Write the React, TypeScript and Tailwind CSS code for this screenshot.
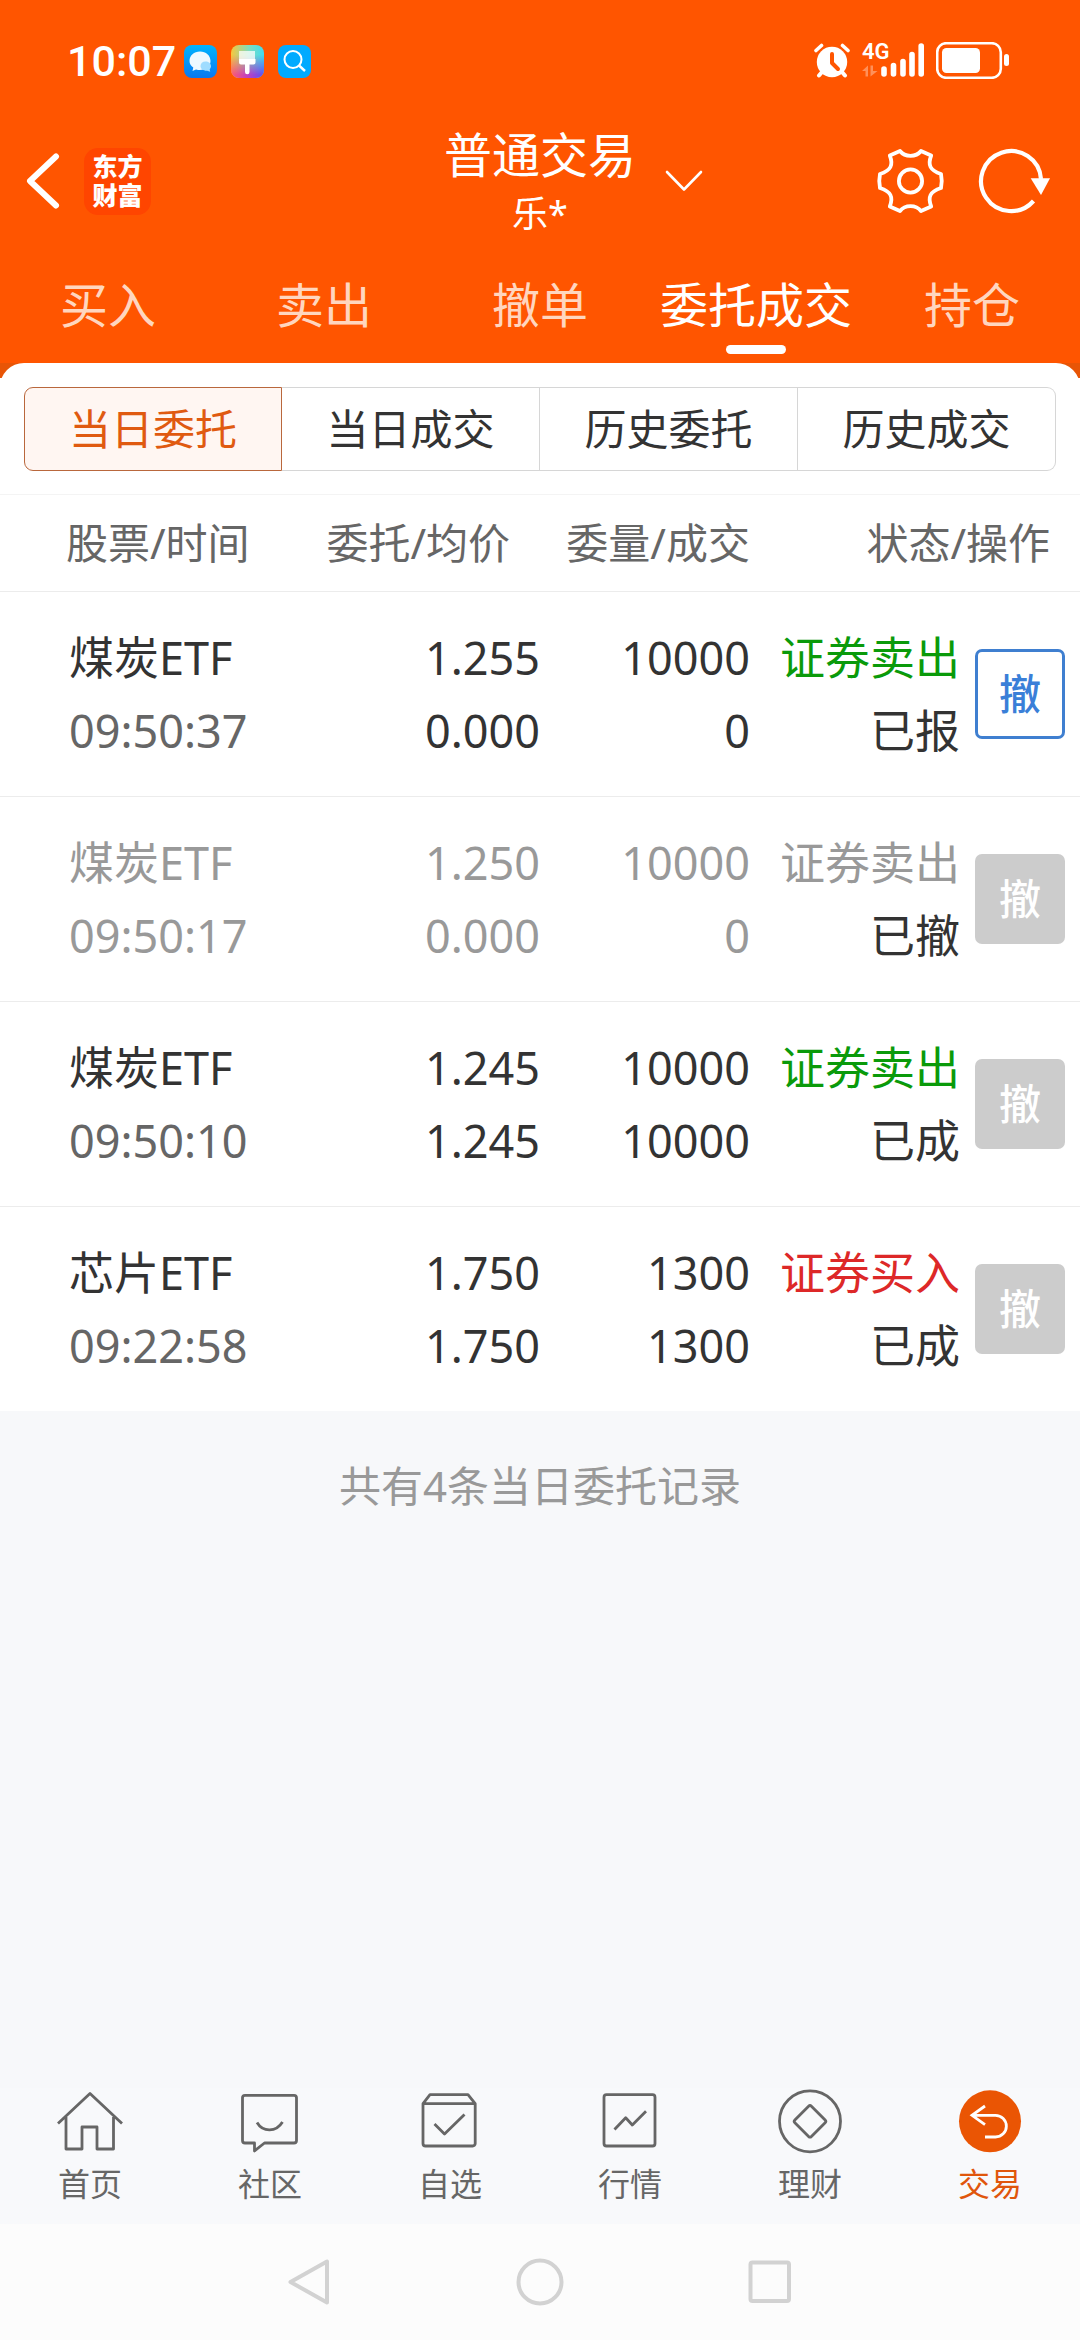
import type { ReactNode } from "react";

type Order = {
  name: string;
  time: string;
  price: string;
  avg: string;
  qty: string;
  filled: string;
  side: "证券卖出" | "证券买入";
  status: string;
  state: "open" | "cancelled" | "done";
};

const tabs = ["买入", "卖出", "撤单", "委托成交", "持仓"];
const segments = ["当日委托", "当日成交", "历史委托", "历史成交"];

const orders: Order[] = [
  { name: "煤炭ETF", time: "09:50:37", price: "1.255", avg: "0.000", qty: "10000", filled: "0", side: "证券卖出", status: "已报", state: "open" },
  { name: "煤炭ETF", time: "09:50:17", price: "1.250", avg: "0.000", qty: "10000", filled: "0", side: "证券卖出", status: "已撤", state: "cancelled" },
  { name: "煤炭ETF", time: "09:50:10", price: "1.245", avg: "1.245", qty: "10000", filled: "10000", side: "证券卖出", status: "已成", state: "done" },
  { name: "芯片ETF", time: "09:22:58", price: "1.750", avg: "1.750", qty: "1300", filled: "1300", side: "证券买入", status: "已成", state: "done" },
];

function StatusBar() {
  return (
    <div className="flex h-[122px] items-start justify-between pt-[41px] pr-[70px] pl-[67px]">
      <div className="flex h-10 items-center gap-2">
        <span className="font-[Roboto] text-[43px] leading-10 font-medium">10:07</span>
        <div className="flex items-center gap-[14px]">
          <svg width="33" height="33" viewBox="0 0 33 33" aria-hidden="true">
            <defs>
              <linearGradient id="msg" x1="0" y1="0" x2="0" y2="1">
                <stop offset="0" stopColor="#00b4ff" />
                <stop offset="1" stopColor="#0a78f0" />
              </linearGradient>
            </defs>
            <rect width="33" height="33" rx="8" fill="url(#msg)" />
            <path d="M16 6.500c6 0 10.500 4 10.500 9.500S22 25 16 25c-1.500 0-2.500 0-4-.6L8.500 26l.8-3.500C7 21 5.500 19 5.500 16 5.500 10.500 10 6.500 16 6.500Z" fill="#eef9ff" />
            <path d="M21.500 16.500c3 0 5.500 2 5.500 4.600 0 1.400-.5 2.400-1.300 3.200l.5 2.500-3-1c-3.500.3-6.700-1.800-6.700-4.700 0-2.600 2-4.600 5-4.600Z" fill="#9fdcff" />
          </svg>
          <svg width="33" height="33" viewBox="0 0 33 33" aria-hidden="true">
            <defs>
              <linearGradient id="themeTop" x1="0" y1="0" x2="1" y2="0">
                <stop offset="0" stopColor="#f8c63c" />
                <stop offset="0.55" stopColor="#7fdcc0" />
                <stop offset="1" stopColor="#3fdcf0" />
              </linearGradient>
              <linearGradient id="themeBottom" x1="0" y1="0" x2="1" y2="0">
                <stop offset="0" stopColor="#ff5a6e" />
                <stop offset="0.5" stopColor="#c040c0" />
                <stop offset="1" stopColor="#5b50f5" />
              </linearGradient>
              <linearGradient id="fade" x1="0" y1="0" x2="0" y2="1">
                <stop offset="0.3" stopColor="#000" />
                <stop offset="0.9" stopColor="#fff" />
              </linearGradient>
              <mask id="fadeMask">
                <rect width="33" height="33" fill="url(#fade)" />
              </mask>
            </defs>
            <rect width="33" height="33" rx="8" fill="url(#themeTop)" />
            <rect width="33" height="33" rx="8" fill="url(#themeBottom)" mask="url(#fadeMask)" />
            <path d="M8 6h16v8H8z" fill="#fff" opacity="0.75" />
            <path d="M8 14h16.500v3.500a2 2 0 0 1-2 2H18.500V27a2 2 0 0 1-4.500 0v-7.500h-4a2 2 0 0 1-2-2Z" fill="#fff" />
          </svg>
          <svg width="33" height="33" viewBox="0 0 33 33" aria-hidden="true">
            <rect width="33" height="33" rx="8" fill="#00aaff" />
            <circle cx="15" cy="14.500" r="8.500" fill="none" stroke="#fff" strokeWidth="2" />
            <path d="m21 20.500 6 5.500" stroke="#fff" strokeWidth="2.400" />
          </svg>
        </div>
      </div>
      <div className="flex h-[38px] items-center gap-3">
        <svg width="36" height="36" viewBox="0 0 36 36" aria-hidden="true">
          <circle cx="18" cy="20" r="15.200" fill="#fff" />
          <path d="M2 8.500 7.500 3.500M34 8.500 28.500 3.500" stroke="#fff" strokeWidth="3.600" strokeLinecap="round" />
          <path d="m8 30-3 3.500M28 30l3 3.500" stroke="#fff" strokeWidth="4" strokeLinecap="round" />
          <path d="M18 12v9l6 6" stroke="#ff5500" strokeWidth="4" strokeLinecap="round" strokeLinejoin="round" fill="none" />
        </svg>
        <div className="relative h-9 w-[62px]">
          <span className="absolute top-0 left-0 font-[Roboto] text-[22px] leading-5 font-semibold">4G</span>
          <svg width="62" height="36" viewBox="0 0 62 36" aria-hidden="true">
            <path d="M22 32v-5M31.500 32V23.500M41 32V19.500M50 32V12.500M59.200 32V4" stroke="#fff" strokeWidth="5.600" strokeLinecap="round" />
            <path d="M0 29 6 23.500v11H3.500v-5.500ZM8.500 23.500H11v5.500h4.500L8.500 34.500Z" fill="#fff" opacity="0.350" />
          </svg>
        </div>
        <svg width="74" height="37" viewBox="0 0 74 37" aria-hidden="true">
          <rect x="1.200" y="1.200" width="63.600" height="34.600" rx="9" fill="none" stroke="#fff" strokeWidth="2.600" />
          <rect x="6" y="6" width="38" height="25" rx="4.500" fill="#fff" />
          <rect x="68" y="12" width="5" height="12" rx="2.500" fill="#fff" />
        </svg>
      </div>
    </div>
  );
}

function TitleBar() {
  return (
    <div className="grid grid-cols-[1fr_auto_1fr] items-center">
      <div className="flex items-center gap-6 pl-6">
        <button type="button" aria-label="返回">
          <svg width="36" height="56" viewBox="0 0 36 56" fill="none" stroke="#fff" strokeWidth="6" strokeLinecap="round" strokeLinejoin="round">
            <path d="M32 3.500 6 28l26 24.500" />
          </svg>
        </button>
        <div className="flex h-[67px] w-[67px] items-center justify-center rounded-[14px] bg-[#ff4500]">
          <span className="w-[50px] text-[25px] leading-[29px] font-black break-all">东方财富</span>
        </div>
      </div>
      <div className="text-center">
        <h1 className="text-[48px] leading-[66px]">普通交易</h1>
        <p className="text-[36px] leading-[52px]">乐*</p>
      </div>
      <div className="flex items-center pr-[25px] pl-7">
        <button type="button" aria-label="切换账户" className="mr-auto">
          <svg width="40" height="24" viewBox="0 0 40 24" fill="none" stroke="#fff" strokeWidth="2.600" strokeLinecap="round" strokeLinejoin="round">
            <path d="m3 3 17 17.500L37 3" />
          </svg>
        </button>
        <button type="button" aria-label="设置" className="mr-[30px]">
          <svg width="70" height="68" viewBox="0 0 70 68" fill="none" stroke="#fff" strokeWidth="3.800" strokeLinejoin="round">
            <path d="M14.800 8.500 25 4C30 10.500 41 10.500 46 4L56.200 8.500C52.500 18 55 23.500 66 27Q67.500 34 66 41C55 44.500 52.500 50 56.200 59.500L46 64C41 57.500 30 57.500 25 64L14.800 59.500C18.500 50 16 44.500 5 41Q3.500 34 5 27C16 23.500 18.500 18 14.800 8.500Z" />
            <circle cx="35.500" cy="34" r="11.600" />
          </svg>
        </button>
        <button type="button" aria-label="刷新">
          <svg width="80" height="68" viewBox="0 0 80 68">
            <path d="M58.500 54A30 30 0 1 1 66 32" fill="none" stroke="#fff" strokeWidth="4.200" />
            <path d="M55.700 31.300H75L66 48Z" fill="#fff" />
          </svg>
        </button>
      </div>
    </div>
  );
}

function TabBar() {
  return (
    <nav className="grid grid-cols-5 pt-[29px] text-[48px] leading-[72px]">
      {tabs.map((t) => {
        const active = t === "委托成交";
        return (
          <button key={t} type="button" className="flex flex-col items-center whitespace-nowrap">
            <span className={active ? "text-white" : "text-[#ffd6bf]"}>{t}</span>
            <span className={active ? "mt-1 mb-[9px] h-[9px] w-[60px] rounded-full bg-white" : "mt-1 mb-[9px] h-[9px] w-[60px]"} />
          </button>
        );
      })}
    </nav>
  );
}

function Segments() {
  return (
    <div className="border-b border-[#f4f4f4] px-6 pt-[9px] pb-[23px]">
      <div className="grid grid-cols-4 text-[42px] leading-[82px]">
        {segments.map((s, i) => (
          <button
            key={s}
            type="button"
            className={
              i === 0
                ? "rounded-l-[9px] border border-[#b9673c] bg-[#fff6f2] text-[#e05a10]"
                : i === 3
                  ? "rounded-r-[9px] border border-l-0 border-[#d6d6d6] text-[#333333]"
                  : "border border-l-0 border-[#d6d6d6] text-[#333333]"
            }
          >
            {s}
          </button>
        ))}
      </div>
    </div>
  );
}

function OrderRow({ o }: { o: Order }) {
  const dim = o.state === "cancelled";
  const main = dim ? "text-[#999999]" : "text-[#333333]";
  const time = dim ? "text-[#999999]" : "text-[#666666]";
  const side = dim ? "text-[#999999]" : o.side === "证券买入" ? "text-[#dd2828]" : "text-[#0a9a0a]";
  return (
    <tr className="h-[205px]">
      <td className="border-t border-[#ececec] pl-[69px]">
        <div className={main}>{o.name}</div>
        <div className={time}>{o.time}</div>
      </td>
      <td className={`border-t border-[#ececec] text-right ${main}`}>
        <div>{o.price}</div>
        <div>{o.avg}</div>
      </td>
      <td className={`border-t border-[#ececec] text-right ${main}`}>
        <div>{o.qty}</div>
        <div>{o.filled}</div>
      </td>
      <td className="border-t border-[#ececec] pr-[15px]">
        <div className="flex items-center justify-end gap-[15px]">
          <div className="text-right whitespace-nowrap">
            <div className={side}>{o.side}</div>
            <div className="text-[#333333]">{o.status}</div>
          </div>
          <button
            type="button"
            disabled={o.state !== "open"}
            className={
              o.state === "open"
                ? "h-[90px] w-[90px] rounded-[7px] border-[3px] border-[#3f7fd0] text-[42px] leading-none font-medium text-[#3a7fd8]"
                : "h-[90px] w-[90px] rounded-[7px] bg-[#cccccc] text-[42px] leading-none font-medium text-white"
            }
          >
            撤
          </button>
        </div>
      </td>
    </tr>
  );
}

function OrderTable() {
  return (
    <table className="w-full table-fixed border-separate border-spacing-0 bg-white text-[45px] leading-[73px]">
      <colgroup>
        <col className="w-[25%]" />
        <col className="w-[25%]" />
        <col className="w-[19.44%]" />
        <col />
      </colgroup>
      <thead>
        <tr className="h-24 text-[42px] leading-[60px] text-[#666666]">
          <th scope="col" className="pl-[66px] text-left font-normal whitespace-nowrap">股票/时间</th>
          <th scope="col" className="pr-[30px] text-right font-normal whitespace-nowrap">委托/均价</th>
          <th scope="col" className="text-right font-normal whitespace-nowrap">委量/成交</th>
          <th scope="col" className="pr-[30px] text-right font-normal whitespace-nowrap">状态/操作</th>
        </tr>
      </thead>
      <tbody>
        {orders.map((o) => (
          <OrderRow key={o.time} o={o} />
        ))}
      </tbody>
    </table>
  );
}

function NavItem({ label, active, children }: { label: string; active?: boolean; children: ReactNode }) {
  return (
    <a href="#" className={active ? "flex flex-col items-center text-[#e0560c]" : "flex flex-col items-center text-[#666666]"}>
      <svg width="72" height="66" viewBox="0 0 72 66" fill="none" stroke="currentColor" strokeWidth="2.800" strokeLinejoin="round" aria-hidden="true">
        {children}
      </svg>
      <span className="mt-1 text-[32px] leading-[52px]">{label}</span>
    </a>
  );
}

function BottomNav() {
  return (
    <nav className="grid grid-cols-6 bg-[#f8f9fb] pb-[14px]">
      <NavItem label="首页">
        <path d="M4 35.500 36 5.500 68 35.500M12 29v32h16V39h15v22h16.500V29" />
      </NavItem>
      <NavItem label="社区">
        <path d="M11 7.300h49a2.500 2.500 0 0 1 2.500 2.500V52.500A2.500 2.500 0 0 1 60 55H30.500L20.500 63V55H11a2.500 2.500 0 0 1-2.500-2.500V9.800A2.500 2.500 0 0 1 11 7.300Z" />
        <path d="M23 34.500c6 10 19 10 25.500-.500" />
      </NavItem>
      <NavItem label="自选">
        <path d="M9 15.700 16 6.700H54L61.200 15.700V55.500A2.500 2.500 0 0 1 58.700 58H11.500A2.500 2.500 0 0 1 9 55.500ZM9 15.700H61.200M20.500 36 30.500 46 50.500 26.500" />
      </NavItem>
      <NavItem label="行情">
        <rect x="10" y="6.700" width="51" height="51.300" rx="2.500" />
        <path d="M20.500 41.500 31.700 29.700 38.300 37 52 23.300" />
      </NavItem>
      <NavItem label="理财">
        <circle cx="36" cy="33.300" r="30.500" />
        <rect x="24.300" y="21.600" width="23.400" height="23.400" rx="2" transform="rotate(45 36 33.300)" />
      </NavItem>
      <NavItem label="交易" active>
        <circle cx="36" cy="33.300" r="31" fill="#ea5504" stroke="none" />
        <path d="M31 18 18 27.300 31 36.700M18 27.300H41.500a10.800 10.800 0 0 1 0 21.700H31" stroke="#fff" strokeLinejoin="miter" />
      </NavItem>
    </nav>
  );
}

function SystemNav() {
  return (
    <div className="grid h-[116px] grid-cols-3 place-items-center bg-[#fcfcfc] px-[18%]">
      <button type="button" aria-label="系统返回">
        <svg width="48" height="48" viewBox="0 0 48 48" fill="none" stroke="#d2d2d2" strokeWidth="4" strokeLinejoin="round">
          <path d="M41 3.500V44.500L4.500 24Z" />
        </svg>
      </button>
      <button type="button" aria-label="主屏幕">
        <svg width="48" height="48" viewBox="0 0 48 48" fill="none" stroke="#d2d2d2" strokeWidth="4">
          <circle cx="24" cy="24" r="21.500" />
        </svg>
      </button>
      <button type="button" aria-label="最近任务">
        <svg width="48" height="48" viewBox="0 0 48 48" fill="none" stroke="#d2d2d2" strokeWidth="4">
          <rect x="4.500" y="4.500" width="38.500" height="38.500" rx="2" />
        </svg>
      </button>
    </div>
  );
}

export default function App() {
  return (
    <div className="flex min-h-screen flex-col bg-[#f7f8fa] font-['Noto_Sans','Noto_Sans_CJK_SC',sans-serif]">
      <header className="bg-[#ff5500] text-white">
        <StatusBar />
        <TitleBar />
        <TabBar />
        <div className="h-[15px] overflow-hidden bg-[#e85506]">
          <div className="h-12 rounded-t-[24px] bg-white" />
        </div>
      </header>
      <main className="flex-1">
        <div className="bg-white">
          <Segments />
          <OrderTable />
        </div>
        <p className="pt-[45px] text-center text-[42px] leading-[60px] text-[#999999]">共有4条当日委托记录</p>
      </main>
      <BottomNav />
      <SystemNav />
    </div>
  );
}
